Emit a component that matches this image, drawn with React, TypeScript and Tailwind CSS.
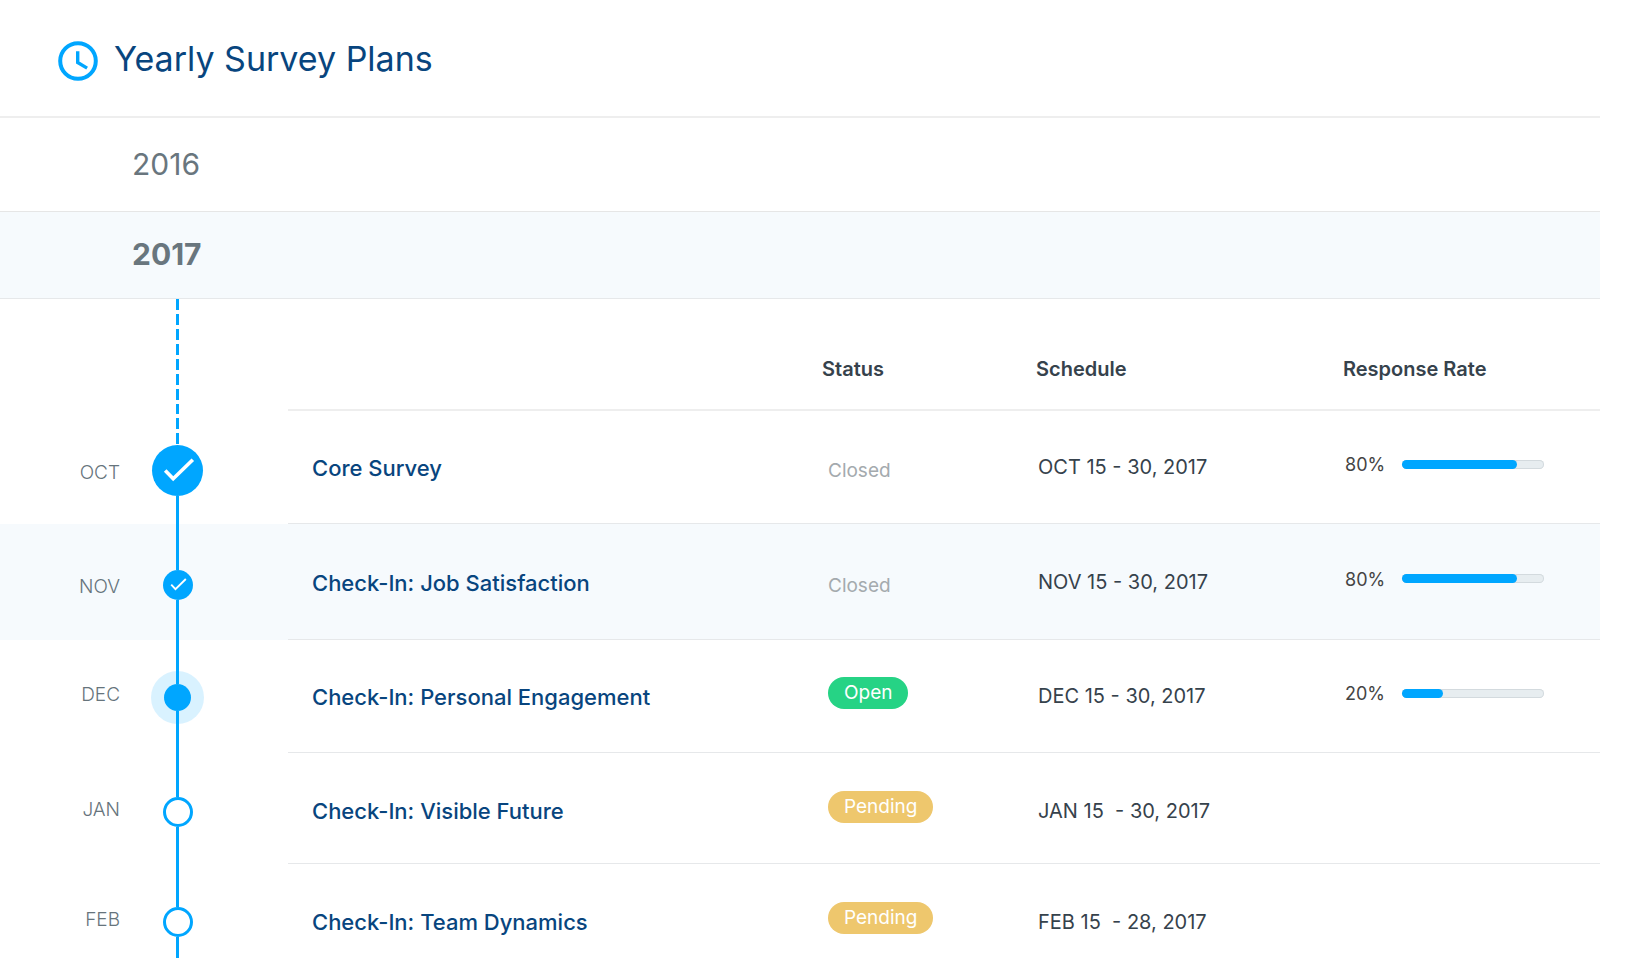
import React from 'react';
import clsx from 'clsx';

type PlanState = 'done' | 'open' | 'pending';

type Plan = {
  month: string;
  name: string;
  status: string;
  schedule: string;
  state: PlanState;
  rate?: { label: string; fill: number };
  highlighted?: boolean;
};

const plans: Plan[] = [
  {
    month: 'OCT',
    name: 'Core Survey',
    status: 'Closed',
    schedule: 'OCT 15 - 30, 2017',
    state: 'done',
    rate: { label: '80%', fill: 81 },
  },
  {
    month: 'NOV',
    name: 'Check-In: Job Satisfaction',
    status: 'Closed',
    schedule: 'NOV 15 - 30, 2017',
    state: 'done',
    rate: { label: '80%', fill: 81 },
    highlighted: true,
  },
  {
    month: 'DEC',
    name: 'Check-In: Personal Engagement',
    status: 'Open',
    schedule: 'DEC 15 - 30, 2017',
    state: 'open',
    rate: { label: '20%', fill: 29 },
  },
  {
    month: 'JAN',
    name: 'Check-In: Visible Future',
    status: 'Pending',
    schedule: 'JAN 15  - 30, 2017',
    state: 'pending',
  },
  {
    month: 'FEB',
    name: 'Check-In: Team Dynamics',
    status: 'Pending',
    schedule: 'FEB 15  - 28, 2017',
    state: 'pending',
  },
];

const rowHeights = ['h-[113px]', 'h-[116px]', 'h-[113px]', 'h-[111px]', 'h-[110px]'];

const dashed = 'bg-[linear-gradient(#00a6ff_11px,transparent_11px)] bg-size-[3px_15px]';

const ClockIcon = () => (
  <svg className="size-10" viewBox="0 0 40 40" fill="none" stroke="#00a6ff" aria-hidden="true">
    <circle cx="20" cy="20" r="17.8" strokeWidth="4" />
    <path d="M19.7 10.2v11.3l9.4 5.6" strokeWidth="3.4" />
  </svg>
);

const CheckIcon = ({ className }: { className: string }) => (
  <svg className={className} viewBox="0 0 34 30" fill="none" stroke="#fff" aria-hidden="true">
    <path d="M4.2 14.5l8 8.3 19.6-19" strokeWidth="3.6" />
  </svg>
);

const Marker = ({ state, large }: { state: PlanState; large: boolean }) => {
  if (state === 'done') {
    return (
      <span
        className={clsx(
          'flex shrink-0 items-center justify-center rounded-full bg-[#00a6ff]',
          large ? 'size-[51px]' : 'size-[30px]'
        )}
      >
        <CheckIcon className={large ? 'w-[34px]' : 'w-[18px]'} />
      </span>
    );
  }
  if (state === 'open') {
    return <span className="size-[27px] shrink-0 rounded-full bg-[#00a6ff] ring-[13px] ring-[#00a6ff]/15" />;
  }
  return <span className="size-[30px] shrink-0 rounded-full border-3 border-[#00a6ff] bg-white" />;
};

const StatusLabel = ({ state, status }: { state: PlanState; status: string }) => {
  if (state === 'done') {
    return <span className="block pt-2 text-[#a4aaae]">{status}</span>;
  }
  return (
    <span
      className={clsx(
        'inline-block h-8 rounded-full px-4 leading-8 text-white',
        state === 'open' ? 'mb-1.5 bg-[#26d385]' : 'mb-0.5 bg-[#eec76d]'
      )}
    >
      {status}
    </span>
  );
};

const ResponseRate = ({ label, fill }: { label: string; fill: number }) => (
  <div className="flex items-center pb-1">
    <span className="w-[57px] text-lg leading-6 text-[#444]">{label}</span>
    <div
      role="progressbar"
      aria-label="Response rate"
      aria-valuenow={parseInt(label, 10)}
      className="mb-0.5 h-[9px] w-[142px] rounded-full bg-[#e7edf0] shadow-[inset_0_0_0_1px_#d3dade]"
    >
      <div className="h-full rounded-full bg-[#00a6ff]" style={{ width: `${fill}%` }} />
    </div>
  </div>
);

const PlanRow = ({ plan, index }: { plan: Plan; index: number }) => {
  const first = index === 0;
  const last = index === plans.length - 1;
  const cell = clsx('p-0', !last && 'border-b border-[#e6e8ea]');
  const pending = plan.state === 'pending';

  return (
    <tr className={clsx(rowHeights[index], plan.highlighted && 'bg-[#f6fafd]')}>
      <th
        scope="row"
        className={clsx(
          'p-0 text-right font-light text-[#66747c]',
          plan.state === 'done' && 'pt-2.5',
          plan.state === 'open' && 'pb-1',
          pending && 'pt-0.5'
        )}
      >
        {plan.month}
      </th>
      <td className={clsx('p-0 pr-[53px]', rowHeights[index])}>
        <div className={clsx('flex flex-col items-center', last ? 'mb-4 h-[94px]' : rowHeights[index])}>
          <span
            className={clsx(
              'w-[3px]',
              first ? [dashed, 'bg-position-[0_-8px]'] : 'bg-[#00a6ff]',
              last && 'h-[43px]',
              !last && (plan.state === 'open' ? 'grow basis-0.5' : 'grow basis-1.5')
            )}
          />
          <Marker state={plan.state} large={first} />
          <span className="w-[3px] grow basis-0 bg-[#00a6ff]" />
        </div>
      </td>
      <td className={clsx(cell, 'pl-6', pending ? 'pt-2' : 'pt-1')}>
        <a href="#" className="text-[22px] font-medium text-[#08457e]">
          {plan.name}
        </a>
      </td>
      <td className={clsx(cell, 'pl-1.5')}>
        <StatusLabel state={plan.state} status={plan.status} />
      </td>
      <td className={clsx(cell, 'pl-0.5 text-xl leading-6 whitespace-pre text-[#36424c]', pending && 'pt-1.5')}>
        {plan.schedule}
      </td>
      <td className={clsx(cell, 'pl-0.5')}>{plan.rate && <ResponseRate {...plan.rate} />}</td>
    </tr>
  );
};

const App: React.FC = () => {
  return (
    <main className="min-h-screen bg-white pr-9 font-['Inter',sans-serif] text-[19px] leading-6">
      <header className="flex h-[118px] items-center gap-4 border-b-2 border-[#eeeeee] pt-1.5 pl-[58px]">
        <ClockIcon />
        <h1 className="pb-1 text-[34px] leading-10 text-[#08457e]">Yearly Survey Plans</h1>
      </header>

      <button
        type="button"
        aria-expanded="false"
        className="block h-[94px] w-full border-b border-[#e6e6e6] pb-0.5 pl-[132px] text-left text-[30px] leading-10 text-[#69767e]"
      >
        2016
      </button>
      <button
        type="button"
        aria-expanded="true"
        className="block h-[87px] w-full border-b border-[#e6e8ea] bg-[#f6fafd] pb-0.5 pl-[132px] text-left text-[30px] leading-10 font-bold text-[#69767e]"
      >
        2017
      </button>

      <table className="w-full table-fixed border-separate border-spacing-0">
        <colgroup>
          <col className="w-[120px]" />
          <col className="w-[168px]" />
          <col />
          <col className="w-[214px]" />
          <col className="w-[307px]" />
          <col className="w-[257px]" />
        </colgroup>
        <thead>
          <tr className="h-[112px] text-left align-bottom text-xl leading-6 text-[#36424c]">
            <td className="p-0" />
            <td className="p-0 pr-[53px]">
              <div className={clsx('mx-auto h-[112px] w-[3px]', dashed)} />
            </td>
            <td className="border-b-2 border-[#eeeeee] p-0" />
            <th scope="col" className="border-b-2 border-[#eeeeee] p-0 pb-7 font-semibold">
              Status
            </th>
            <th scope="col" className="border-b-2 border-[#eeeeee] p-0 pb-7 font-semibold">
              Schedule
            </th>
            <th scope="col" className="border-b-2 border-[#eeeeee] p-0 pb-7 font-semibold">
              Response Rate
            </th>
          </tr>
        </thead>
        <tbody>
          {plans.map((plan, index) => (
            <PlanRow key={plan.month} plan={plan} index={index} />
          ))}
        </tbody>
      </table>
    </main>
  );
};

export default App;
